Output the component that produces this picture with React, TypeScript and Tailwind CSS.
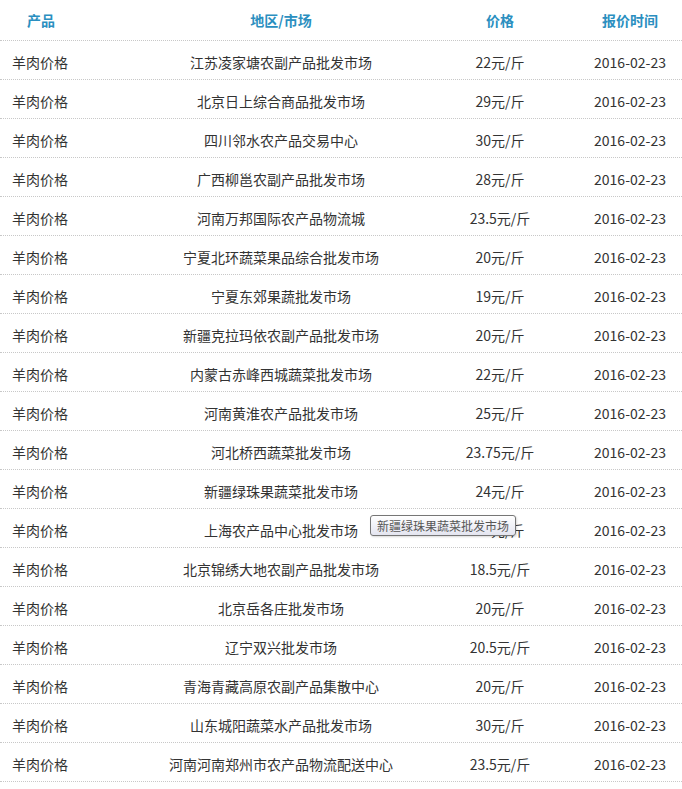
const ROWS: [string, string, string][] = [
  ["江苏凌家塘农副产品批发市场", "22元/斤", "2016-02-23"],
  ["北京日上综合商品批发市场", "29元/斤", "2016-02-23"],
  ["四川邻水农产品交易中心", "30元/斤", "2016-02-23"],
  ["广西柳邕农副产品批发市场", "28元/斤", "2016-02-23"],
  ["河南万邦国际农产品物流城", "23.5元/斤", "2016-02-23"],
  ["宁夏北环蔬菜果品综合批发市场", "20元/斤", "2016-02-23"],
  ["宁夏东郊果蔬批发市场", "19元/斤", "2016-02-23"],
  ["新疆克拉玛依农副产品批发市场", "20元/斤", "2016-02-23"],
  ["内蒙古赤峰西城蔬菜批发市场", "22元/斤", "2016-02-23"],
  ["河南黄淮农产品批发市场", "25元/斤", "2016-02-23"],
  ["河北桥西蔬菜批发市场", "23.75元/斤", "2016-02-23"],
  ["新疆绿珠果蔬菜批发市场", "24元/斤", "2016-02-23"],
  ["上海农产品中心批发市场", "16元/斤", "2016-02-23"],
  ["北京锦绣大地农副产品批发市场", "18.5元/斤", "2016-02-23"],
  ["北京岳各庄批发市场", "20元/斤", "2016-02-23"],
  ["辽宁双兴批发市场", "20.5元/斤", "2016-02-23"],
  ["青海青藏高原农副产品集散中心", "20元/斤", "2016-02-23"],
  ["山东城阳蔬菜水产品批发市场", "30元/斤", "2016-02-23"],
  ["河南河南郑州市农产品物流配送中心", "23.5元/斤", "2016-02-23"],
];

const GRID = "grid grid-cols-[140px_282px_156px_104px]";

export default function App() {
  return (
    <main className="relative w-[682px] bg-white text-[14px] text-[#333] font-['Noto_Sans_CJK_SC','Noto_Sans',sans-serif]">
      <div className={`${GRID} h-[41px] items-center border-b border-dotted border-[#c8c8c8] font-bold text-[#2b8fc0]`}>
        <div className="pl-[27px]">产品</div>
        <div className="text-center">地区/市场</div>
        <div className="text-center">价格</div>
        <div className="text-center">报价时间</div>
      </div>

      {ROWS.map(([market, price, date], i) => (
        <div key={i} className={`${GRID} h-[39px] items-center pt-[4px] border-b border-dotted border-[#c8c8c8]`}>
          <div className="pl-3">羊肉价格</div>
          <div className="text-center">{market}</div>
          <div className="text-center">{price}</div>
          <div className="text-center">{date}</div>
        </div>
      ))}

      {/* hover tooltip */}
      <div className="absolute left-[370px] top-[515px] h-[21px] rounded-[3px] border border-[#767676] bg-gradient-to-b from-white to-[#e4e5f0] px-[6px] text-[12px] leading-[19px] text-[#575757] shadow-[1px_1px_2px_rgba(0,0,0,0.15)]">
        新疆绿珠果蔬菜批发市场
      </div>
    </main>
  );
}
